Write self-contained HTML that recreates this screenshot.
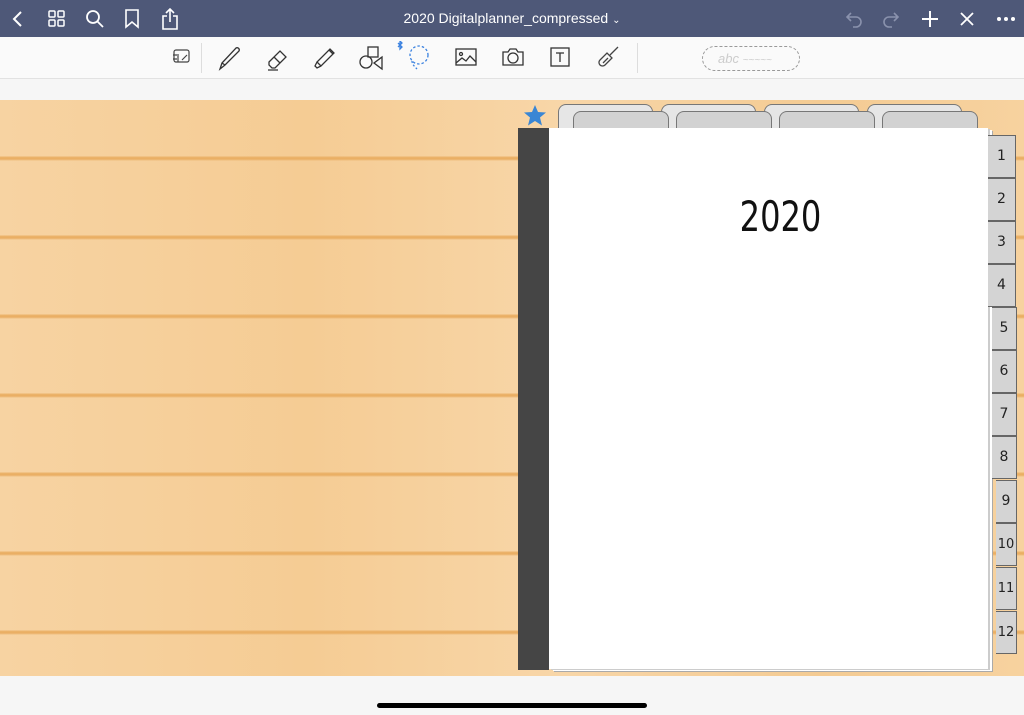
<!DOCTYPE html>
<html><head><meta charset="utf-8"><style>
*{margin:0;padding:0;box-sizing:border-box}
body{width:1024px;height:715px;overflow:hidden;position:relative;background:#f6f6f6;font-family:"Liberation Sans",sans-serif}
.hdr{position:absolute;left:0;top:0;width:1024px;height:37px;background:#4e5878}
.hdr svg{position:absolute}
.title{position:absolute;left:0;width:1024px;top:10px;text-align:center;color:#fff;font-size:14px}
.tb{position:absolute;top:37px;left:0;width:1024px;height:42px;background:#fafafa;border-bottom:1px solid #e2e2e2}
.tb svg{position:absolute;top:8px}
.wood{position:absolute;left:0;top:100px;width:1024px;height:576px;
background:
repeating-linear-gradient(180deg,transparent 0,transparent 54px,#ecb46c 55px,#e9ad62 57px,transparent 59px,transparent 79px),
linear-gradient(90deg,#f7d3a2,#f5cc94 30%,#f8d6a8 55%,#f4cb93 80%,#f7d29f);
background-position:0 2px,0 0}
.spine{position:absolute;left:518px;top:128px;width:31px;height:542px;background:#454545}
.page{position:absolute;left:549px;top:128px;width:439px;height:541px;background:#fff;box-shadow:2px 1px 0 #ccc,4px 2px 0 #fff,5px 3px 0 #aaa}
.yr{position:absolute;left:561px;top:192px;width:439px;text-align:center;font-size:42px;color:#111;font-family:"DejaVu Sans Condensed","DejaVu Sans",sans-serif;transform:scaleX(0.85);transform-origin:center}
.tt{position:absolute;height:26px;border:1px solid #777;border-bottom:none;border-radius:8px 8px 0 0}
.rt{position:absolute;width:28px;height:43px;background:#d4d4d4;border:1px solid #666;border-left:none;font-family:"DejaVu Sans",sans-serif;font-size:14px;text-align:center;line-height:41px;color:#222}
.home{position:absolute;left:377px;top:703px;width:270px;height:5px;border-radius:3px;background:#000}
</style></head><body>
<div class="hdr">
<svg style="left:10px;top:10px" width="16" height="18" viewBox="0 0 16 18"><path d="M11 2 4 9l7 7" fill="none" stroke="#fff" stroke-width="2"/></svg>
<svg style="left:48px;top:10px" width="18" height="18" viewBox="0 0 18 18" fill="none" stroke="#fff" stroke-width="1.5"><rect x="1" y="1" width="6" height="6" rx="1"/><rect x="10" y="1" width="6" height="6" rx="1"/><rect x="1" y="10" width="6" height="6" rx="1"/><rect x="10" y="10" width="6" height="6" rx="1"/></svg>
<svg style="left:85px;top:9px" width="20" height="20" viewBox="0 0 20 20" fill="none" stroke="#fff" stroke-width="1.8"><circle cx="8" cy="8" r="6"/><path d="M12.5 12.5 18 18"/></svg>
<svg style="left:124px;top:9px" width="16" height="20" viewBox="0 0 16 20" fill="none" stroke="#fff" stroke-width="1.6"><path d="M2 1h12v17l-6-5-6 5z"/></svg>
<svg style="left:161px;top:8px" width="18" height="22" viewBox="0 0 18 22" fill="none" stroke="#fff" stroke-width="1.6"><path d="M6 8H2v13h14V8h-4M9 14V1M5 5l4-4 4 4"/></svg>
<div class="title">2020 Digitalplanner_compressed <span style="font-size:10px">⌄</span></div>
<svg style="left:845px;top:10px" width="18" height="18" viewBox="0 0 18 18" fill="none" stroke="#8a92ad" stroke-width="1.6"><path d="M6 3 2 7l4 4M2 7h9a5 5 0 010 10H8"/></svg>
<svg style="left:882px;top:10px" width="18" height="18" viewBox="0 0 18 18" fill="none" stroke="#8a92ad" stroke-width="1.6"><path d="M12 3l4 4-4 4M16 7H7a5 5 0 000 10h3"/></svg>
<svg style="left:921px;top:10px" width="18" height="18" viewBox="0 0 18 18" stroke="#fff" stroke-width="2"><path d="M9 1v16M1 9h16"/></svg>
<svg style="left:959px;top:11px" width="16" height="16" viewBox="0 0 16 16" stroke="#fff" stroke-width="1.8"><path d="M2 2l12 12M14 2 2 14"/></svg>
<svg style="left:996px;top:16px" width="20" height="6" viewBox="0 0 20 6" fill="#fff"><circle cx="3" cy="3" r="2"/><circle cx="10" cy="3" r="2"/><circle cx="17" cy="3" r="2"/></svg>
</div>
<div class="tb">
<svg style="left:170px" width="22" height="24" viewBox="0 0 22 24" fill="none" stroke="#444" stroke-width="1.2"><rect x="4" y="5" width="15" height="12" rx="2"/><path d="M8 9v8M3 10h4M3 14h4M12 15l5-5"/></svg>
<div style="position:absolute;left:201px;top:6px;width:1px;height:30px;background:#ddd"></div>
<svg style="left:216px" width="26" height="26" viewBox="0 0 26 26" fill="none" stroke="#333" stroke-width="1.3"><path d="M4 24l2-6L20 3c2-1 4 1 3 3L9 20z M6 18l3 2"/></svg>
<svg style="left:265px" width="26" height="26" viewBox="0 0 26 26" fill="none" stroke="#333" stroke-width="1.3"><path d="M4 17 15 6l6 6-11 11H7l-3-3zM9 12l6 6M3 25h10"/></svg>
<svg style="left:312px" width="26" height="26" viewBox="0 0 26 26" fill="none" stroke="#333" stroke-width="1.3"><path d="M8 20l-3-3L18 4l4 4L9 21zM5 17l-2 4 2 2 4-2M17 5l4 4"/></svg>
<svg style="left:358px" width="26" height="26" viewBox="0 0 26 26" fill="none" stroke="#333" stroke-width="1.3"><rect x="10" y="2" width="10" height="10"/><circle cx="8" cy="17" r="6"/><path d="M24 12v12l-8-6z"/></svg>
<svg style="left:395px;top:4px" width="36" height="30" viewBox="0 0 36 30" fill="none" stroke="#3b82e0" stroke-width="1.3"><path d="M3 2l4 4-2 2V0l2 2-4 4"/><circle cx="24" cy="14" r="9" stroke-dasharray="2.5 2"/><path d="M17 20c0 3 2 5 5 8" stroke-dasharray="2 2"/></svg>
<svg style="left:454px" width="24" height="24" viewBox="0 0 24 24" fill="none" stroke="#333" stroke-width="1.3"><rect x="2" y="4" width="20" height="16"/><circle cx="7" cy="9" r="1.5"/><path d="M2 18l6-5 4 3 4-5 6 6"/></svg>
<svg style="left:501px" width="24" height="24" viewBox="0 0 24 24" fill="none" stroke="#333" stroke-width="1.3"><path d="M2 7h5l2-3h6l2 3h5v13H2z"/><circle cx="12" cy="13" r="5"/></svg>
<svg style="left:548px" width="24" height="24" viewBox="0 0 24 24" fill="none" stroke="#333" stroke-width="1.3"><rect x="3" y="3" width="18" height="18"/><path d="M8 8h8M12 8v9"/></svg>
<svg style="left:596px" width="24" height="24" viewBox="0 0 24 24" fill="none" stroke="#444" stroke-width="1.3"><path d="M22 2 14 10M4 15l7-7 5 5-7 7a3.5 3.5 0 01-5-5zM7 18l5-5"/></svg>
<div style="position:absolute;left:637px;top:6px;width:1px;height:30px;background:#ddd"></div>
<div style="position:absolute;left:702px;top:9px;width:98px;height:25px;border:1px dashed #999;border-radius:13px;color:#ccc;font-size:13px;font-style:italic;line-height:23px;padding-left:15px">abc <span style="font-size:10px">~~~~~</span></div>
</div>
<div class="wood"></div>
<svg style="position:absolute;left:523px;top:104px" width="24" height="22" viewBox="0 0 24 22"><path d="M12 1l3 7 8 .5-6 5 2 8-7-4.5-7 4.5 2-8-6-5 8-.5z" fill="#3a86d4"/></svg>
<div class="tt" style="left:558px;top:104px;width:95px;background:#e6e6e6"></div>
<div class="tt" style="left:661px;top:104px;width:95px;background:#e6e6e6"></div>
<div class="tt" style="left:764px;top:104px;width:95px;background:#e6e6e6"></div>
<div class="tt" style="left:867px;top:104px;width:95px;background:#e6e6e6"></div>
<div class="tt" style="left:573px;top:111px;width:96px;height:18px;background:#d2d2d2"></div>
<div class="tt" style="left:676px;top:111px;width:96px;height:18px;background:#d2d2d2"></div>
<div class="tt" style="left:779px;top:111px;width:96px;height:18px;background:#d2d2d2"></div>
<div class="tt" style="left:882px;top:111px;width:96px;height:18px;background:#d2d2d2"></div>
<div class="spine"></div>
<div class="page"></div>
<div class="yr">2020</div>
<div class="rt" style="left:988px;top:135px">1</div>
<div class="rt" style="left:988px;top:178px">2</div>
<div class="rt" style="left:988px;top:221px">3</div>
<div class="rt" style="left:988px;top:264px">4</div>
<div class="rt" style="left:992px;top:307px;width:25px">5</div>
<div class="rt" style="left:992px;top:350px;width:25px">6</div>
<div class="rt" style="left:992px;top:393px;width:25px">7</div>
<div class="rt" style="left:992px;top:436px;width:25px">8</div>
<div class="rt" style="left:996px;top:480px;width:21px">9</div>
<div class="rt" style="left:996px;top:523px;width:21px;font-size:13px">10</div>
<div class="rt" style="left:996px;top:567px;width:21px;font-size:13px">11</div>
<div class="rt" style="left:996px;top:611px;width:21px;font-size:13px">12</div>
<div class="home"></div>
</body></html>
